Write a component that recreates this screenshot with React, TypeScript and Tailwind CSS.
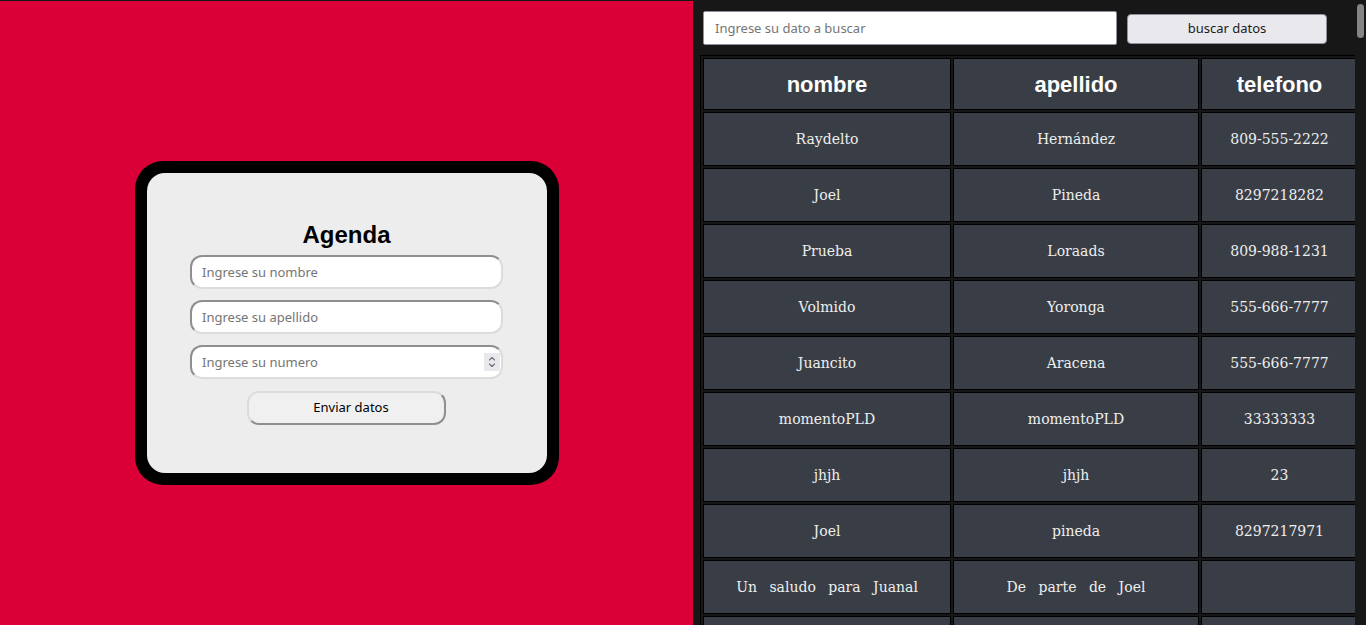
import { useState } from 'react';

const ROWS = [
  ['Raydelto', 'Hernández', '809-555-2222'],
  ['Joel', 'Pineda', '8297218282'],
  ['Prueba', 'Loraads', '809-988-1231'],
  ['Volmido', 'Yoronga', '555-666-7777'],
  ['Juancito', 'Aracena', '555-666-7777'],
  ['momentoPLD', 'momentoPLD', '33333333'],
  ['jhjh', 'jhjh', '23'],
  ['Joel', 'pineda', '8297217971'],
  ['Un saludo para Juanal', 'De parte de Joel', ''],
];

const ALL_ROWS = Array.from({ length: 18 }, (_, i) => ROWS[i % ROWS.length]);

const sans = "font-['Noto_Sans',_'Open_Sans',_sans-serif]";
const field =
  'w-[313px] h-[34px] rounded-xl border-2 border-solid border-t-[#8f8f8f] border-l-[#8f8f8f] border-b-[#dcdcdc] border-r-[#dcdcdc] bg-white';

function Spinner() {
  return (
    <div className="w-4 h-[18px] bg-[#e9e9ed] flex items-center justify-center mr-px">
      <svg width="10" height="14" viewBox="0 0 10 14" fill="none" stroke="#6b6b74" strokeWidth="1.1" strokeLinecap="round" strokeLinejoin="round">
        <path d="M2.5 5 L5 2.5 L7.5 5" />
        <path d="M2.5 9 L5 11.5 L7.5 9" />
      </svg>
    </div>
  );
}

export default function App() {
  const [nombre, setNombre] = useState('');
  const [apellido, setApellido] = useState('');
  const [numero, setNumero] = useState('');
  const [buscar, setBuscar] = useState('');

  return (
    <div className="h-screen grid grid-cols-[693px_minmax(0,1fr)] border-t border-[#171717] overflow-hidden">
      <div className="bg-[#DA0037] flex items-center justify-center pt-5">
        <div className="w-[424px] h-[324px] bg-black rounded-[28px] p-3">
          <div className="h-full bg-[#EDEDED] rounded-[18px] flex flex-col items-center pt-12">
            <h1 className="font-['Liberation_Sans',_Arial,_sans-serif] font-bold text-[24px] leading-7 text-black">Agenda</h1>
            <div className="flex flex-col gap-[11px] mt-1.5">
              <input value={nombre} onChange={(e) => setNombre(e.target.value)} placeholder="Ingrese su nombre" className={`${field} ${sans} px-2.5 text-[13px] outline-none placeholder:text-[#757575]`} />
              <input value={apellido} onChange={(e) => setApellido(e.target.value)} placeholder="Ingrese su apellido" className={`${field} ${sans} px-2.5 text-[13px] outline-none placeholder:text-[#757575]`} />
              <div className={`${field} flex items-center overflow-hidden`}>
                <input value={numero} onChange={(e) => setNumero(e.target.value)} placeholder="Ingrese su numero" className={`${sans} flex-1 min-w-0 h-full px-2.5 text-[13px] outline-none bg-transparent placeholder:text-[#757575]`} />
                <Spinner />
              </div>
            </div>
            <button className={`${sans} mt-3 w-[199px] h-[34px] pl-[9px] rounded-xl border-2 border-solid border-t-[#dcdcdc] border-l-[#dcdcdc] border-b-[#8f8f8f] border-r-[#8f8f8f] bg-[#F0F0F0] text-[13px] text-black`}>Enviar datos</button>
          </div>
        </div>
      </div>

      <div className="bg-[#171717] flex min-h-0 min-w-0">
        <div className="flex-1 min-w-0 pl-[7px] pt-2.5 overflow-y-auto overflow-x-hidden [scrollbar-width:none]">
          <div className="flex items-center gap-2.5 ml-[3px]">
            <input value={buscar} onChange={(e) => setBuscar(e.target.value)} placeholder="Ingrese su dato a buscar" className={`${sans} w-[414px] h-[34px] bg-white border border-[#8f8f9d] rounded-[2px] px-[11px] text-[13px] outline-none placeholder:text-[#757575]`} />
            <button className={`${sans} w-[200px] h-[30px] mt-px pt-px bg-[#E9E9ED] border border-[#8f8f9d] rounded text-[13px] text-[#1b1b1b]`}>buscar datos</button>
          </div>

          <table className="mt-2.5 w-[661px] table-fixed border-separate border-spacing-[2px] border border-black">
            <thead>
              <tr>
                {['nombre', 'apellido', 'telefono'].map((h, i) => (
                  <th key={h} className={`${i === 0 ? 'w-[248px]' : i === 1 ? 'w-[246px]' : 'w-[157px]'} h-[52px] border border-black bg-[#393E46] text-white font-['Liberation_Sans',_Arial,_sans-serif] font-bold text-[22px]`}>{h}</th>
                ))}
              </tr>
            </thead>
            <tbody>
              {ALL_ROWS.map((r, i) => (
                <tr key={i}>
                  {r.map((c, j) => (
                    <td key={j} className="h-[54px] border border-black bg-[#393E46] text-center text-[#EEEEEE] font-['DejaVu_Serif',_serif] text-[14px] [word-spacing:8px]">{c}</td>
                  ))}
                </tr>
              ))}
            </tbody>
          </table>
        </div>
        {/* scroll rail */}
        <div className="w-[11px] shrink-0 pt-[3px] flex justify-center">
          <div className="w-[7px] h-[34px] rounded-full bg-[#858585]" />
        </div>
      </div>
    </div>
  );
}
